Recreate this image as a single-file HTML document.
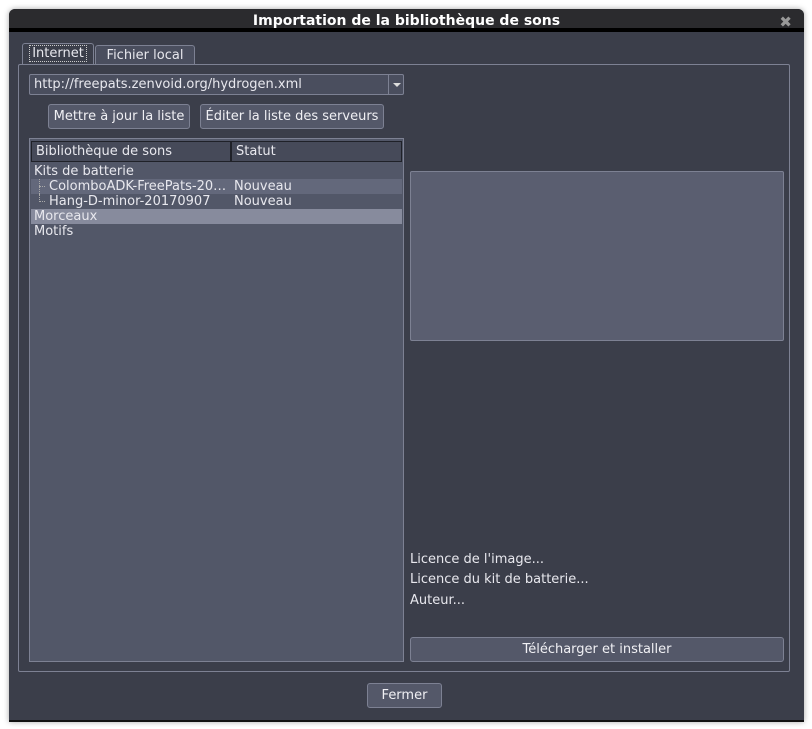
<!DOCTYPE html>
<html><head><meta charset="utf-8"><style>
*{box-sizing:border-box;margin:0;padding:0}
body{width:812px;height:729px;background:#fff;position:relative;overflow:hidden;font-family:"DejaVu Sans","Liberation Sans",sans-serif;font-size:13px;color:#e8e8ee}
.abs{position:absolute}
#win{left:9px;top:9px;width:795px;height:713px;background:#3b3e4a;box-shadow:0 0 6px rgba(0,0,0,.35);border-radius:6px 6px 0 0;overflow:hidden;border-bottom:2px solid #111}
#title{left:0;top:0;width:795px;height:23px;background:#2b2b2e;border-bottom:4px solid #000;color:#fff;font-weight:bold;font-size:14px;text-align:center;line-height:24px}
#x{right:12px;top:4px;color:#999;font-size:15px;font-weight:bold}
.btn{position:absolute;background:#545869;border:1px solid #7d8193;border-radius:3px;text-align:center;color:#f0f0f4;line-height:24px}
.tab{position:absolute;border:1px solid #7d8193;border-bottom:none;border-radius:3px 3px 0 0;text-align:center}
#panel{left:9px;top:55px;width:772px;height:608px;border:1px solid #7d8193;border-radius:2px}
#tree{left:20px;top:129px;width:375px;height:524px;border:1px solid #7d8193;background:#525768}
.hd{position:absolute;top:2px;height:21px;background:#464a59;border:1px solid #1f2128;line-height:20px;padding-left:4px}
.row{position:absolute;left:1px;width:371px;height:15px;line-height:15px;padding-left:3px;white-space:nowrap}
.ch{padding-left:18px}
.ln{position:absolute;left:8px;top:0;width:6px;height:8px;border-left:1px dotted #aaa;border-bottom:1px dotted #aaa}
</style></head><body>
<div id="win" class="abs">
 <div id="title" class="abs">Importation de la bibliothèque de sons</div>
 <div id="x" class="abs">✖</div>
 <div class="tab" style="left:13px;top:34px;width:72px;height:21px;background:#3b3e4a;line-height:20px"><span style="border:1px dotted #ccc;padding:0 2px">Internet</span></div>
 <div class="tab" style="left:86px;top:36px;width:100px;height:19px;background:#4a4e5e;line-height:19px">Fichier local</div>
 <div id="panel" class="abs"></div>
 <div class="abs" style="left:20px;top:65px;width:375px;height:21px;background:#4a4e5e;border:1px solid #7d8193;border-radius:2px;line-height:20px;padding-left:4px">http://freepats.zenvoid.org/hydrogen.xml
  <div class="abs" style="right:0;top:0;width:15px;height:19px;border-left:1px solid #7d8193;"><div class="abs" style="left:4px;top:8px;border-left:4px solid transparent;border-right:4px solid transparent;border-top:4px solid #ddd"></div></div></div>
 <div class="btn" style="left:39px;top:95px;width:142px;height:25px">Mettre à jour la liste</div>
 <div class="btn" style="left:191px;top:95px;width:184px;height:25px">Éditer la liste des serveurs</div>
 <div id="tree" class="abs">
  <div class="hd" style="left:1px;width:200px">Bibliothèque de sons</div>
  <div class="hd" style="left:201px;width:171px">Statut</div>
  <div class="row" style="top:25px">Kits de batterie</div>
  <div class="row ch" style="top:40px;background:#63687b"><span class="ln" style="height:15px;border-bottom:none"></span><span class="ln" style="height:8px;border-left:none"></span>ColomboADK-FreePats-20…<span class="abs" style="left:203px">Nouveau</span></div>
  <div class="row ch" style="top:55px"><span class="ln"></span>Hang-D-minor-20170907<span class="abs" style="left:203px">Nouveau</span></div>
  <div class="row" style="top:70px;background:#878b9d">Morceaux</div>
  <div class="row" style="top:85px">Motifs</div>
 </div>
 <div class="abs" style="left:401px;top:162px;width:374px;height:170px;background:#5a5e70;border:1px solid #7d8193;border-radius:2px"></div>
 <div class="abs" style="left:401px;top:543px">Licence de l'image...</div>
 <div class="abs" style="left:401px;top:563px">Licence du kit de batterie...</div>
 <div class="abs" style="left:401px;top:584px">Auteur...</div>
 <div class="btn" style="left:401px;top:628px;width:374px;height:25px">Télécharger et installer</div>
 <div class="btn" style="left:358px;top:674px;width:75px;height:25px">Fermer</div>
</div>
</body></html>
